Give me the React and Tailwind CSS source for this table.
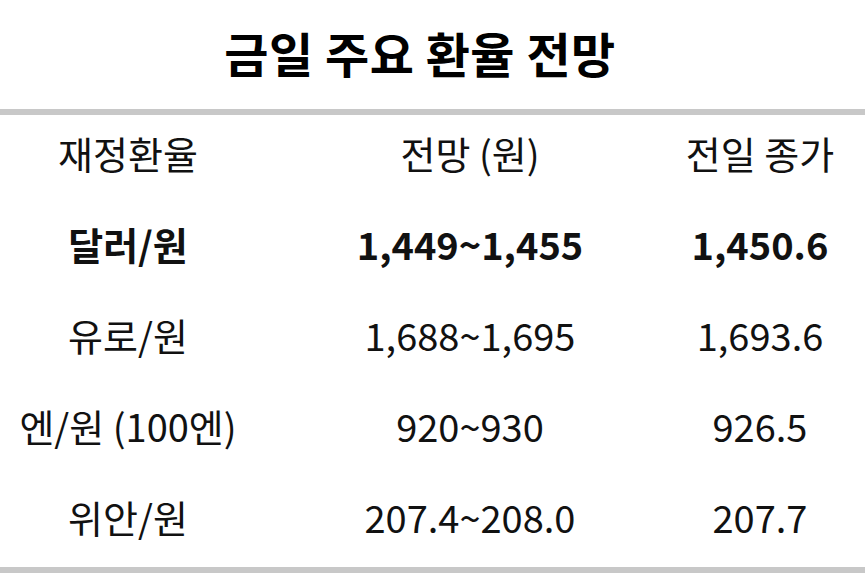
const ROWS = [
  { name: '달러/원', range: '1,449~1,455', close: '1,450.6', bold: true },
  { name: '유로/원', range: '1,688~1,695', close: '1,693.6' },
  { name: '엔/원 (100엔)', range: '920~930', close: '926.5' },
  { name: '위안/원', range: '207.4~208.0', close: '207.7' },
];

const font = { fontFamily: '"Noto Sans CJK KR", "Noto Sans", sans-serif' };

function Row({ cells, bold, className = 'h-[91px]' }) {
  return (
    <div
      className={`grid grid-cols-[256px_428px_152px] items-center text-[38px] text-[#111] ${className} ${
        bold ? 'font-semibold' : 'font-normal'
      }`}
    >
      {cells.map((c, i) => (
        <div key={i} className="text-center whitespace-nowrap leading-none">
          {c}
        </div>
      ))}
    </div>
  );
}

export default function App() {
  return (
    <div className="w-[865px] h-[582px] bg-white flex flex-col overflow-hidden" style={font}>
      {/* Title */}
      <div className="h-[109px] flex items-center justify-center pr-[25px] pb-[6px]">
        <h1 className="text-[48px] font-bold text-black leading-none tracking-[0.5px]">금일 주요 환율 전망</h1>
      </div>
      <div className="h-[6px] bg-[#c8c8c8]" />

      <div className="h-[452px] flex flex-col">
        <Row cells={['재정환율', '전망 (원)', '전일 종가']} className="h-[83px] pb-[7px]" />
        {ROWS.map((r) => (
          <Row key={r.name} cells={[r.name, r.range, r.close]} bold={r.bold} />
        ))}
      </div>

      <div className="h-[6px] bg-[#c8c8c8]" />
    </div>
  );
}
